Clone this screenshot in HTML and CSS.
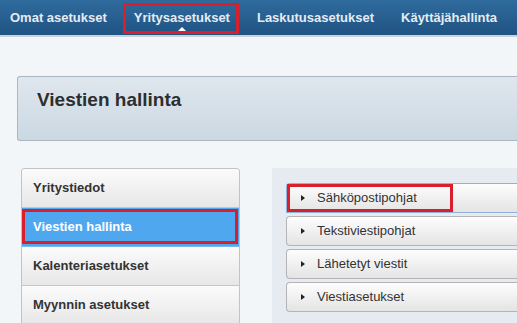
FILE: index.html
```html
<!DOCTYPE html>
<html lang="fi">
<head>
<meta charset="utf-8">
<title>Viestien hallinta</title>
<link rel="stylesheet" href="styles.css">
</head>
<body>
<div class="page">
  <nav class="topnav">
    <a class="nav-item">Omat asetukset</a>
    <a class="nav-item is-current">Yritysasetukset</a>
    <a class="nav-item">Laskutusasetukset</a>
    <a class="nav-item">Käyttäjähallinta</a>
  </nav>
  <main class="content">
    <header class="page-head">
      <h1 class="page-title">Viestien hallinta</h1>
    </header>
    <div class="columns">
      <ul class="side-menu">
        <li class="side-item">Yritystiedot</li>
        <li class="side-item is-active">Viestien hallinta</li>
        <li class="side-item">Kalenteriasetukset</li>
        <li class="side-item">Myynnin asetukset</li>
      </ul>
      <section class="panel">
        <div class="acc-item is-open"><span class="tri"></span><span>Sähköpostipohjat</span></div>
        <div class="acc-item"><span class="tri"></span><span>Tekstiviestipohjat</span></div>
        <div class="acc-item"><span class="tri"></span><span>Lähetetyt viestit</span></div>
        <div class="acc-item"><span class="tri"></span><span>Viestiasetukset</span></div>
      </section>
    </div>
  </main>
</div>
</body>
</html>
```

FILE: styles.css
```css
html, body {
  margin: 0;
  padding: 0;
  overflow: hidden;
}
body {
  background: #f3f6f9;
  font-family: "Liberation Sans", Arial, sans-serif;
  color: #333;
}
.page {
  width: 517px;
}
.topnav {
  display: flex;
  align-items: center;
  gap: 27px;
  height: 35px;
  padding-left: 10px;
  background: linear-gradient(#2f6b9d, #1f5383);
  border-bottom: 2px solid #c8d0d8;
}
.nav-item {
  position: relative;
  display: flex;
  align-items: center;
  height: 35px;
  font-size: 13px;
  font-weight: bold;
  color: #e4ecf3;
  white-space: nowrap;
}
.nav-item.is-current::after {
  content: "";
  position: absolute;
  left: 50%;
  bottom: 3px;
  margin-left: -5px;
  border-left: 5px solid transparent;
  border-right: 5px solid transparent;
  border-bottom: 5px solid #ffffff;
}
.nav-item.is-current::before {
  content: "";
  position: absolute;
  left: -11px;
  right: -9px;
  top: 3px;
  bottom: 1px;
  border: 3px solid #d81f2b;
  z-index: 1;
}
.content {
  padding: 39px 0 0 17px;
}
.page-head {
  height: 63px;
  box-sizing: content-box;
  border: 1px solid #aab7c3;
  border-right: none;
  border-radius: 3px 0 0 3px;
  background: linear-gradient(#dfe7ee, #cbd8e2);
  padding: 0 0 0 19px;
}
.page-title {
  margin: 0;
  padding-top: 12px;
  font-size: 19px;
  line-height: 22px;
  font-weight: bold;
  color: #2e2e2e;
}
.columns {
  display: flex;
  gap: 32px;
  margin-top: 27px;
  padding-left: 4px;
}
.side-menu {
  list-style: none;
  margin: 0;
  padding: 0;
  width: 217px;
  flex: none;
  border: 1px solid #c3c3c3;
  border-bottom: none;
  border-radius: 4px 4px 0 0;
  overflow: hidden;
}
.side-item {
  position: relative;
  height: 39px;
  box-sizing: border-box;
  padding: 11px 0 0 11px;
  font-size: 13px;
  line-height: 16px;
  font-weight: bold;
  color: #333;
  background: linear-gradient(#fbfbfb, #e7e7e7);
  border-bottom: 1px solid #c6c6c6;
}
.side-item.is-active {
  background: #4fa8ef;
  color: #ffffff;
  border-bottom-color: #79baf0;
}
.side-item.is-active::after {
  content: "";
  position: absolute;
  left: 0;
  right: 1px;
  top: 1px;
  bottom: 2px;
  border: 3px solid #d81f2b;
}
.panel {
  flex: 1;
  background: #e5ebf0;
  padding: 15px 0 20px 14px;
  display: flex;
  flex-direction: column;
  gap: 3px;
}
.acc-item {
  position: relative;
  display: flex;
  align-items: center;
  height: 30px;
  box-sizing: border-box;
  padding: 0 0 1px 14px;
  border: 1px solid #b4b4b4;
  border-right: none;
  border-radius: 4px 0 0 4px;
  background: linear-gradient(#fdfdfd, #e4e4e4);
  font-size: 13px;
  color: #333;
}
.acc-item.is-open {
  border-color: #8eb2da;
  border-radius: 4px 0 0 0;
}
.acc-item.is-open::after {
  content: "";
  position: absolute;
  left: 0;
  top: 0;
  width: 166px;
  height: 28px;
  box-sizing: border-box;
  border: 3px solid #d81f2b;
}
.tri {
  width: 0;
  height: 0;
  border-top: 3.5px solid transparent;
  border-bottom: 3.5px solid transparent;
  border-left: 4px solid #222;
  margin-right: 12px;
}
```
